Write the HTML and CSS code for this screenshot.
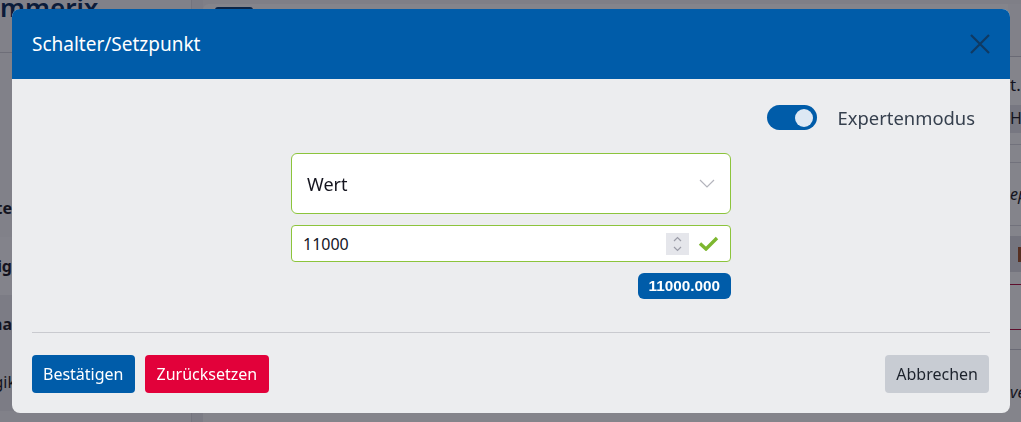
FILE: index.html
```html
<!DOCTYPE html>
<html lang="de">
<head>
<meta charset="utf-8">
<title>Schalter/Setzpunkt</title>
<link rel="stylesheet" href="styles.css">
</head>
<body>
<div class="page">
  <aside class="sidebar">
    <div class="logo">mmerix</div>
    <nav class="nav">
      <div class="nav-item bold">Geräte</div>
      <div class="nav-item bold active">Konfig</div>
      <div class="nav-item bold">Antenna</div>
      <div class="nav-item last">Logik</div>
    </nav>
  </aside>
  <div class="gutter"></div>
  <main class="content">
    <div class="main-col">
      <div class="topbar"><span class="top-btn"></span></div>
    </div>
    <div class="side-col">
      <div class="side-head"></div>
      <div class="side-row strong">t.</div>
      <div class="side-box">Hinweis</div>
      <div class="side-line short"></div>
      <div class="side-line"></div>
      <div class="side-row italic">ep</div>
      <div class="side-box dark"><span class="brown"></span></div>
      <div class="side-red"></div>
      <div class="side-line gray"></div>
      <div class="side-row italic low">ve</div>
    </div>
  </main>
</div>

<div class="backdrop"></div>

<div class="modal-layer">
  <div class="modal">
    <header class="modal-header">
      <h1 class="modal-title">Schalter/Setzpunkt</h1>
      <button class="close" aria-label="Schließen">
        <svg width="20" height="20" viewBox="0 0 20 20"><path d="M1 1 L19 19 M19 1 L1 19" stroke="#0f3a63" stroke-width="2.2" fill="none"/></svg>
      </button>
    </header>
    <div class="modal-body">
      <div class="toggle-row">
        <span class="toggle"><span class="knob"></span></span>
        <span class="toggle-label">Expertenmodus</span>
      </div>
      <div class="form-col">
        <div class="select">
          <span>Wert</span>
          <svg width="16" height="9" viewBox="0 0 16 9"><polyline points="1,1 8,8 15,1" stroke="#b3b4bc" stroke-width="1.2" fill="none"/></svg>
        </div>
        <div class="input">
          <span class="value">11000</span>
          <span class="spinner">
            <svg width="9" height="16" viewBox="0 0 9 16"><polyline points="1,5 4.5,1.5 8,5" stroke="#9b9ca7" stroke-width="1.2" fill="none"/><polyline points="1,11 4.5,14.5 8,11" stroke="#9b9ca7" stroke-width="1.2" fill="none"/></svg>
          </span>
          <svg class="check" width="21" height="15" viewBox="0 0 21 15"><polyline points="2,7.5 8,13 19,2" stroke="#7db72f" stroke-width="3.4" fill="none"/></svg>
        </div>
        <div class="badge-row"><span class="badge">11000.000</span></div>
      </div>
    </div>
    <footer class="modal-footer">
      <div class="btn-group">
        <button class="btn btn-primary">Bestätigen</button>
        <button class="btn btn-danger">Zurücksetzen</button>
      </div>
      <button class="btn btn-secondary">Abbrechen</button>
    </footer>
  </div>
</div>
</body>
</html>
```

FILE: styles.css
```css
* { box-sizing: border-box; }
html, body { margin: 0; padding: 0; height: 100%; }
body {
  font-family: "Noto Sans", "Open Sans", sans-serif;
  background: #f3f3f7;
  overflow: hidden;
}

.page {
  display: flex;
  height: 422px;
}

.sidebar {
  width: 192px;
  background: #f7f7fb;
  border-right: 1px solid #dcdce4;
  overflow: hidden;
}
.logo {
  font-size: 26px;
  font-weight: 600;
  line-height: 26px;
  color: #0a2c5c;
  margin-top: -6px;
  padding-bottom: 32px;
  border-bottom: 1px solid #d0d0d8;
  white-space: nowrap;
}
.nav { display: flex; flex-direction: column; }
.nav-item {
  height: 58px;
  display: flex;
  align-items: center;
  justify-content: flex-end;
  padding-right: 179px;
  font-size: 16px;
  color: #1c1c28;
  white-space: nowrap;
}
.nav-item:first-child { margin-top: 126px; }
.nav-item.bold { font-weight: 700; }
.nav-item.active { background: #fbfbff; }
.nav-item:nth-child(3), .nav-item:nth-child(4) { background: #ececf2; }
.nav-item.last { padding-right: 175px; }

.gutter { width: 11px; background: #ededf3; }

.content {
  flex: 1;
  display: flex;
  background: #fdfdff;
  border-top-left-radius: 6px;
  margin-top: 4px;
}
.main-col { flex: 1; }
.topbar { padding: 3px 0 0 12px; }
.top-btn {
  display: block;
  width: 38px;
  height: 30px;
  background: #0b3f78;
  border-radius: 3px;
}

.side-col {
  width: 13px;
  overflow: hidden;
  white-space: nowrap;
  font-size: 16px;
  color: #1c1c28;
}
.side-head { height: 53px; border-bottom: 1px solid #c8c8d2; background: #f6f6fa; }
.side-row { padding-left: 2px; }
.side-row.strong { height: 48px; padding-top: 16px; line-height: 24px; font-size: 17px; }
.side-row.italic {
  font-style: italic;
  height: 63px;
  line-height: 63px;
  border-bottom: 1px solid #d8d8e0;
}
.side-row.low { border-bottom: none; height: 60px; line-height: 24px; padding-top: 30px; }
.side-box { height: 28px; line-height: 27px; background: #e2e2ea; padding-left: 2px; }
.side-box.dark {
  height: 36px;
  background: #dcdce5;
  margin-top: 10px;
  display: flex;
  align-items: center;
  padding-left: 10px;
}
.brown { display: block; width: 3px; height: 15px; background: #a0522d; }
.side-line { height: 18px; border-bottom: 1px solid #d8d8e0; }
.side-line.short { height: 12px; }
.side-line.gray { height: 20px; border-bottom-color: #c8c8d2; }
.side-red {
  height: 46px;
  border-top: 1px solid #b01040;
  border-bottom: 1px solid #b01040;
  margin-top: 12px;
}

.backdrop {
  position: fixed;
  inset: 0;
  background: rgba(12, 12, 24, 0.5);
}

.modal-layer {
  position: fixed;
  inset: 0;
  padding: 9px 11px 9px 12px;
}
.modal {
  height: 404px;
  background: #ecedef;
  border-radius: 8px;
  overflow: hidden;
  display: flex;
  flex-direction: column;
}
.modal-header {
  height: 70px;
  background: #005ca9;
  display: flex;
  align-items: center;
  justify-content: space-between;
  padding: 0 20px;
}
.modal-title {
  margin: 0;
  font-size: 19px;
  font-weight: 400;
  color: #ffffff;
}
.close {
  border: 0;
  background: transparent;
  padding: 0;
  width: 20px;
  height: 20px;
  display: flex;
}

.modal-body {
  flex: 1;
  padding: 26px 20px 0 20px;
}
.toggle-row {
  display: flex;
  justify-content: flex-end;
  align-items: center;
  gap: 21px;
  padding-right: 15px;
  height: 25px;
}
.toggle {
  width: 50px;
  height: 25px;
  border-radius: 13px;
  background: #005ca9;
  display: flex;
  align-items: center;
  justify-content: flex-end;
  padding-right: 4px;
}
.knob {
  width: 18px;
  height: 18px;
  border-radius: 50%;
  background: #dde8f4;
}
.toggle-label {
  font-size: 18.4px;
  color: #36404e;
}

.form-col {
  width: 440px;
  margin: 23px auto 0;
  display: flex;
  flex-direction: column;
  gap: 11px;
}
.select {
  height: 61px;
  background: #fff;
  border: 1px solid #8cc43c;
  border-radius: 6px;
  display: flex;
  align-items: center;
  justify-content: space-between;
  padding: 0 15px 0 15px;
  font-size: 18px;
  color: #15151f;
}
.input {
  height: 37px;
  background: #fff;
  border: 1px solid #8cc43c;
  border-radius: 4px;
  display: flex;
  align-items: center;
  padding: 0 11px 0 11px;
  font-size: 16px;
  color: #15151f;
}
.value { flex: 1; }
.spinner {
  width: 23px;
  height: 22px;
  background: #e5e6eb;
  display: flex;
  align-items: center;
  justify-content: center;
  margin-right: 9px;
}
.badge-row { display: flex; justify-content: flex-end; }
.badge {
  height: 26px;
  padding: 0 11px;
  background: #005ca9;
  border-radius: 6px;
  color: #fff;
  font-family: "Liberation Sans", Arial, sans-serif;
  font-weight: 700;
  font-size: 15.3px;
  line-height: 26px;
}

.modal-footer {
  margin: 0 20px;
  border-top: 1px solid #c9cacf;
  padding: 22px 0 20px;
  display: flex;
  justify-content: space-between;
  align-items: center;
}
.btn-group { display: flex; gap: 10px; }
.btn {
  height: 38px;
  border: 0;
  border-radius: 4px;
  padding: 0 11px;
  font-family: "Noto Sans", "Open Sans", sans-serif;
  font-size: 16px;
}
.btn-primary { background: #005ca9; color: #fff; }
.btn-danger { background: #e2013a; color: #fff; padding: 0 12px; }
.btn-secondary { background: #c8ccd3; color: #1c222c; margin-right: 1px; }
```
